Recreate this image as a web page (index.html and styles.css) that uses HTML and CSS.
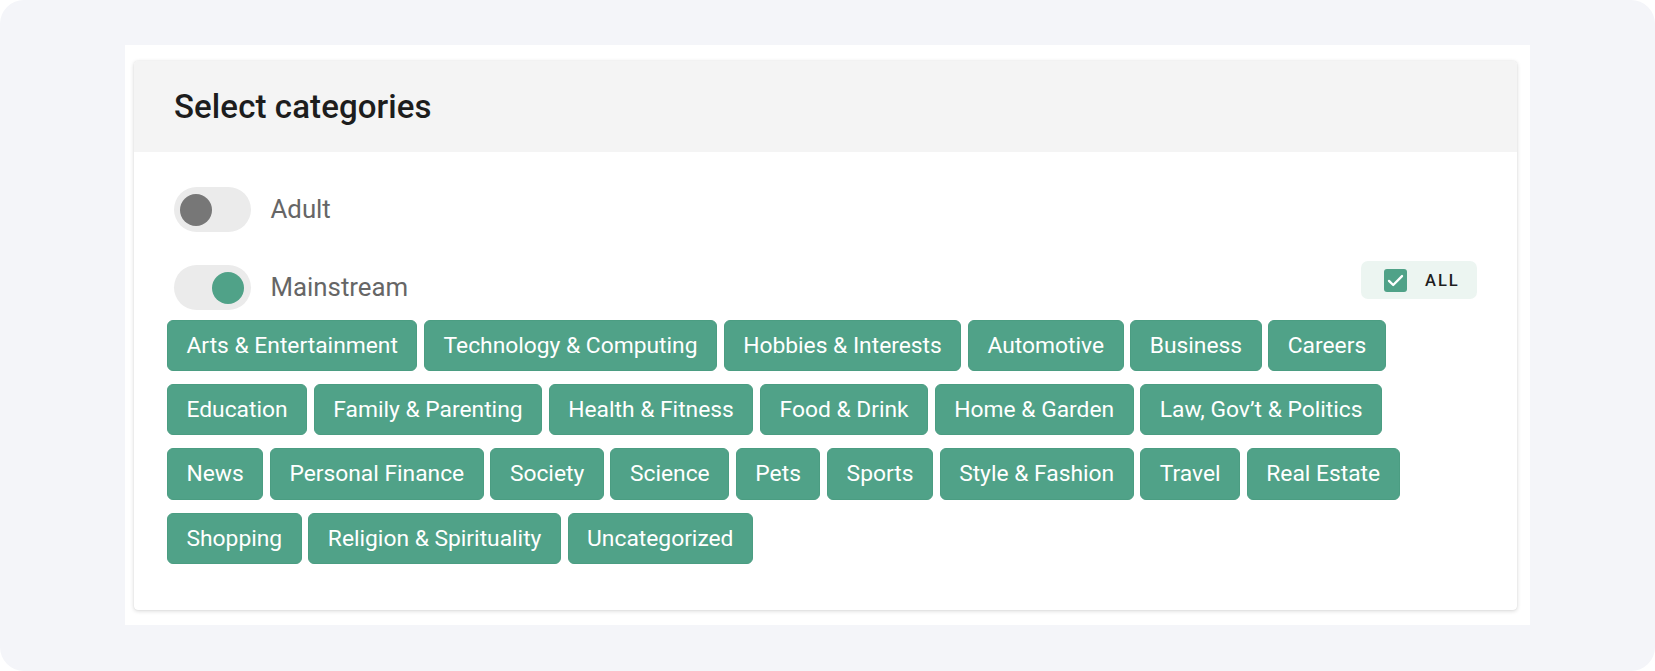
FILE: index.html
```html
<!DOCTYPE html>
<html lang="en">
<head>
<meta charset="utf-8">
<title>Select categories</title>
<link rel="stylesheet" href="styles.css">
</head>
<body>
<div class="stage">
  <div class="panel">
    <section class="card">
      <header class="card-head">
        <h2 class="title">Select categories</h2>
      </header>
      <div class="card-body">
        <div class="toggle-row">
          <label class="toggle">
            <span class="track"><span class="knob"></span></span>
            <span class="toggle-label">Adult</span>
          </label>
        </div>
        <div class="toggle-row toggle-row--main">
          <label class="toggle toggle--on">
            <span class="track"><span class="knob"></span></span>
            <span class="toggle-label">Mainstream</span>
          </label>
          <button class="all-btn" type="button">
            <span class="checkbox">
              <svg viewBox="0 0 24 24" width="23" height="23" aria-hidden="true"><path d="M5.2 12.4l4.4 4.3 9.2-9.3" fill="none" stroke="#ffffff" stroke-width="2.4" stroke-linecap="round" stroke-linejoin="round"/></svg>
            </span>
            <span class="all-text">ALL</span>
          </button>
        </div>
        <div class="tags">
          <span class="tag">Arts &amp; Entertainment</span>
          <span class="tag">Technology &amp; Computing</span>
          <span class="tag">Hobbies &amp; Interests</span>
          <span class="tag">Automotive</span>
          <span class="tag">Business</span>
          <span class="tag">Careers</span>
          <span class="tag">Education</span>
          <span class="tag">Family &amp; Parenting</span>
          <span class="tag">Health &amp; Fitness</span>
          <span class="tag">Food &amp; Drink</span>
          <span class="tag">Home &amp; Garden</span>
          <span class="tag">Law, Gov’t &amp; Politics</span>
          <span class="tag">News</span>
          <span class="tag">Personal Finance</span>
          <span class="tag">Society</span>
          <span class="tag">Science</span>
          <span class="tag">Pets</span>
          <span class="tag">Sports</span>
          <span class="tag">Style &amp; Fashion</span>
          <span class="tag">Travel</span>
          <span class="tag">Real Estate</span>
          <span class="tag">Shopping</span>
          <span class="tag">Religion &amp; Spirituality</span>
          <span class="tag">Uncategorized</span>
        </div>
      </div>
    </section>
  </div>
</div>
</body>
</html>
```
FILE: styles.css
```css
* { box-sizing: border-box; }

html, body {
  margin: 0;
  padding: 0;
  background: #ffffff;
}

body {
  font-family: Roboto, "Noto Sans", "Liberation Sans", sans-serif;
  width: 1655px;
  height: 671px;
  overflow: hidden;
}

.stage {
  width: 1655px;
  height: 671px;
  background: #f4f5f9;
  border-radius: 24px;
  padding: 45px 125px 46px 125px;
}

.panel {
  background: #ffffff;
  height: 100%;
  padding: 16px 13px 15px 9px;
}

.card {
  background: #ffffff;
  border-radius: 4px;
  box-shadow: 0 1px 4px rgba(0, 0, 0, 0.16), 0 0 1px rgba(0, 0, 0, 0.12);
  overflow: hidden;
  height: 549px;
}

.card-head {
  height: 91px;
  background: #f4f4f4;
  display: flex;
  align-items: center;
  padding-left: 40px;
}

.title {
  margin: 0;
  font-size: 33px;
  font-weight: 500;
  color: #1d1d1d;
  letter-spacing: 0.1px;
}

.card-body {
  padding: 35px 40px 46px 33px;
}

.toggle-row {
  display: flex;
  align-items: flex-start;
  justify-content: space-between;
  padding-left: 6.5px;
}

.toggle-row--main {
  margin-top: 29px;
}

.toggle-row--main .toggle {
  margin-top: 4px;
}

.toggle {
  display: flex;
  align-items: center;
  gap: 20px;
  cursor: pointer;
}

.track {
  width: 77px;
  height: 45px;
  border-radius: 23px;
  background: #ebebeb;
  display: flex;
  align-items: center;
  padding: 0 6.5px;
}

.knob {
  width: 32px;
  height: 32px;
  border-radius: 50%;
  background: #777777;
}

.toggle--on .track {
  justify-content: flex-end;
}

.toggle--on .knob {
  background: #50a288;
}

.toggle-label {
  font-size: 25.8px;
  color: #666666;
  line-height: 1;
}

.all-btn {
  display: flex;
  align-items: center;
  height: 38px;
  width: 116px;
  padding: 0 0 0 22.5px;
  border: 0;
  border-radius: 7px;
  background: #ecf5f1;
  font-family: inherit;
  cursor: pointer;
}

.checkbox {
  width: 23px;
  height: 23px;
  border-radius: 3px;
  background: #50a288;
  display: flex;
  align-items: center;
  justify-content: center;
}

.all-text {
  margin-left: 18.5px;
  font-size: 16.5px;
  font-weight: 500;
  letter-spacing: 2px;
  color: #1e1e1e;
}

.tags {
  display: flex;
  flex-wrap: wrap;
  gap: 13px 6.7px;
  margin-top: 9.5px;
  padding-right: 37px;
}

.tag {
  display: inline-flex;
  align-items: center;
  height: 51.4px;
  padding: 0 18.5px;
  border-radius: 6px;
  background: #50a288;
  border: 1px solid #4b9d82;
  color: #ffffff;
  font-size: 22.8px;
  white-space: nowrap;
}
```
